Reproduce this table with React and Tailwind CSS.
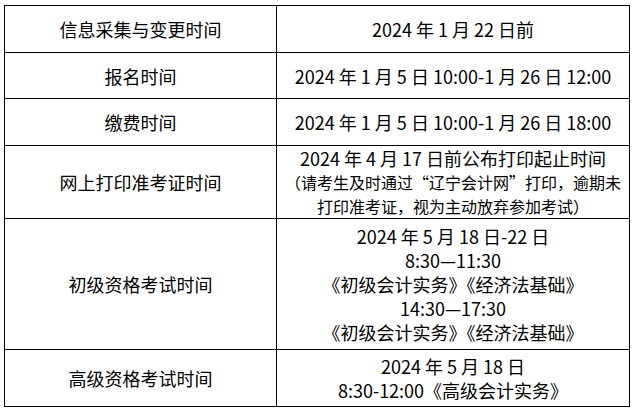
import React from 'react';

const rows = [
  { label: '信息采集与变更时间', h: 'h-[47px]', lines: ['2024 年 1 月 22 日前'] },
  { label: '报名时间', h: 'h-[46px]', lines: ['2024 年 1 月 5 日 10:00-1 月 26 日 12:00'] },
  { label: '缴费时间', h: 'h-[47px]', lines: ['2024 年 1 月 5 日 10:00-1 月 26 日 18:00'] },
  {
    label: '网上打印准考证时间',
    h: 'h-[72px]',
    lines: ['2024 年 4 月 17 日前公布打印起止时间'],
    small: ['（请考生及时通过“辽宁会计网”打印，逾期未', '打印准考证，视为主动放弃参加考试）'],
  },
  {
    label: '初级资格考试时间',
    h: 'h-[131px]',
    lines: ['2024 年 5 月 18 日-22 日', '8:30—11:30', '《初级会计实务》《经济法基础》', '14:30—17:30', '《初级会计实务》《经济法基础》'],
  },
  { label: '高级资格考试时间', h: 'h-[57px]', lines: ['2024 年 5 月 18 日', '8:30-12:00《高级会计实务》'] },
];

const App = () => {
  return (
    <div className="min-h-screen bg-white pt-[5px] pl-1 text-black font-['Noto_Sans_CJK_SC',sans-serif]">
      <table className="w-[626px] border-collapse table-fixed">
        <colgroup>
          <col className="w-[272px]" />
          <col />
        </colgroup>
        <tbody>
          {rows.map((row) => (
            <tr key={row.label} className={row.h}>
              <td className="border border-black text-center text-[18px] leading-6 p-0">{row.label}</td>
              <td className="border border-black text-center text-[18px] leading-6 p-0">
                {row.lines.map((line) => (
                  <div key={line}>{line}</div>
                ))}
                {row.small &&
                  row.small.map((line) => (
                    <div key={line} className="text-[16px] leading-6">{line}</div>
                  ))}
              </td>
            </tr>
          ))}
        </tbody>
      </table>
    </div>
  );
};

export default App;
